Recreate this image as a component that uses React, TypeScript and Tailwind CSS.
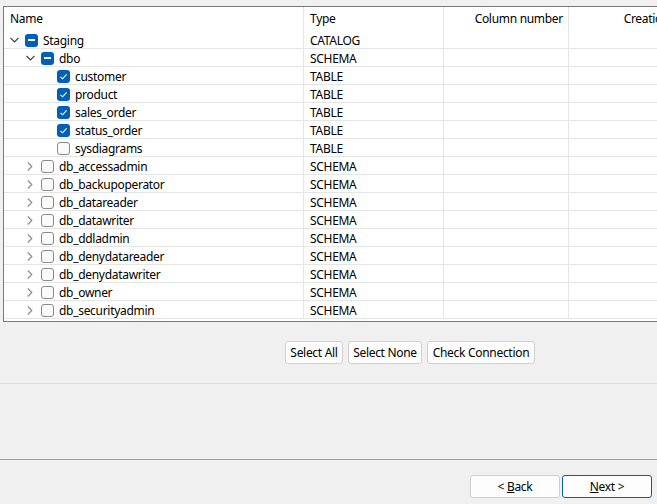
import React from "react";

type Node = {
  name: string;
  type: string;
  level: number;
  state: "checked" | "unchecked" | "mixed";
  expander: "open" | "closed" | "none";
};

const rows: Node[] = [
  { name: "Staging", type: "CATALOG", level: 0, state: "mixed", expander: "open" },
  { name: "dbo", type: "SCHEMA", level: 1, state: "mixed", expander: "open" },
  { name: "customer", type: "TABLE", level: 2, state: "checked", expander: "none" },
  { name: "product", type: "TABLE", level: 2, state: "checked", expander: "none" },
  { name: "sales_order", type: "TABLE", level: 2, state: "checked", expander: "none" },
  { name: "status_order", type: "TABLE", level: 2, state: "checked", expander: "none" },
  { name: "sysdiagrams", type: "TABLE", level: 2, state: "unchecked", expander: "none" },
  { name: "db_accessadmin", type: "SCHEMA", level: 1, state: "unchecked", expander: "closed" },
  { name: "db_backupoperator", type: "SCHEMA", level: 1, state: "unchecked", expander: "closed" },
  { name: "db_datareader", type: "SCHEMA", level: 1, state: "unchecked", expander: "closed" },
  { name: "db_datawriter", type: "SCHEMA", level: 1, state: "unchecked", expander: "closed" },
  { name: "db_ddladmin", type: "SCHEMA", level: 1, state: "unchecked", expander: "closed" },
  { name: "db_denydatareader", type: "SCHEMA", level: 1, state: "unchecked", expander: "closed" },
  { name: "db_denydatawriter", type: "SCHEMA", level: 1, state: "unchecked", expander: "closed" },
  { name: "db_owner", type: "SCHEMA", level: 1, state: "unchecked", expander: "closed" },
  { name: "db_securityadmin", type: "SCHEMA", level: 1, state: "unchecked", expander: "closed" },
];

const indent = ["pl-[2px]", "pl-[18px]", "pl-[34px]"];

const Expander = ({ kind }: { kind: Node["expander"] }) => (
  <span className="w-[16px] h-[18px] flex items-center justify-center shrink-0">
    {kind === "open" && (
      <svg width="9" height="6" viewBox="0 0 9 6" fill="none">
        <path d="M0.5 0.8 L4.5 4.8 L8.5 0.8" stroke="#3a3a3a" strokeWidth="1.2" />
      </svg>
    )}
    {kind === "closed" && (
      <svg width="6" height="9" viewBox="0 0 6 9" fill="none">
        <path d="M0.8 0.5 L4.8 4.5 L0.8 8.5" stroke="#8c8c8c" strokeWidth="1.2" />
      </svg>
    )}
  </span>
);

const Check = ({ state }: { state: Node["state"] }) => {
  if (state === "unchecked") {
    return <span className="ml-[3px] w-[13px] h-[13px] shrink-0 rounded-[3px] border border-[#8a8a8a] bg-[#fafafa]" />;
  }
  return (
    <span className="ml-[3px] w-[13px] h-[13px] shrink-0 rounded-[3px] bg-[#005fb8] flex items-center justify-center">
      {state === "checked" ? (
        <svg width="9" height="9" viewBox="0 0 9 9" fill="none">
          <path d="M1.5 4.8 L3.6 6.8 L7.6 2.4" stroke="#ffffff" strokeWidth="1.1" />
        </svg>
      ) : (
        <span className="w-[7px] h-[1.5px] bg-white" />
      )}
    </span>
  );
};

const cols = "grid grid-cols-[300px_140px_125px_132px]";
const btn = "h-[23px] shrink-0 bg-[#fdfdfd] border border-[#d0d0d0] rounded-[3px] whitespace-nowrap";

export default function App() {
  return (
    <div
      className="w-[657px] h-[504px] bg-[#f0f0f0] overflow-hidden flex flex-col text-[12px] tracking-[-0.3px] text-black"
      style={{ fontFamily: '"Noto Sans", "Segoe UI", sans-serif' }}
    >
      {/* Tree table */}
      <div className="mt-[6px] ml-[3px] w-[720px] h-[316px] shrink-0 border border-[#7a7a7a] bg-white overflow-hidden">
        <div className={`${cols} h-[24px]`}>
          <div className="border-r border-[#e5e5e5] pl-[6px] flex items-center">Name</div>
          <div className="border-r border-[#e5e5e5] pl-[6px] flex items-center">Type</div>
          <div className="border-r border-[#e5e5e5] pr-[5px] flex items-center justify-end">Column number</div>
          <div className="pr-[5px] flex items-center justify-end">Creation date</div>
        </div>
        {rows.map((r) => (
          <div key={r.name} className={`${cols} h-[18px] border-b border-[#e5e5e5]`}>
            <div className={`border-r border-[#e5e5e5] flex items-center ${indent[r.level]}`}>
              <Expander kind={r.expander} />
              <Check state={r.state} />
              <span className="ml-[5px] leading-[17px] whitespace-nowrap">{r.name}</span>
            </div>
            <div className="border-r border-[#e5e5e5] pl-[6px] flex items-center leading-[17px]">{r.type}</div>
            <div className="border-r border-[#e5e5e5]" />
            <div />
          </div>
        ))}
      </div>

      {/* Selection buttons */}
      <div className="mt-[19px] ml-[285px] flex gap-[5px]">
        <button className={`${btn} w-[58px]`}>Select All</button>
        <button className={`${btn} w-[74px]`}>Select None</button>
        <button className={`${btn} w-[108px]`}>Check Connection</button>
      </div>

      <div className="mt-[19px] h-px bg-[#dcdcdc] shrink-0" />

      <div className="flex-1" />

      {/* Wizard footer */}
      <div className="h-px bg-[#a0a0a0] shrink-0" />
      <div className="h-[44px] flex justify-end items-start pt-[15px] pr-[5px] gap-[2px]">
        <button className={`${btn} w-[90px]`}>
          &lt; <span className="underline">B</span>ack
        </button>
        <button className="w-[90px] h-[23px] bg-[#fdfdfd] border border-[#005fb8] rounded-[3px]">
          <span className="underline">N</span>ext &gt;
        </button>
      </div>
    </div>
  );
}
